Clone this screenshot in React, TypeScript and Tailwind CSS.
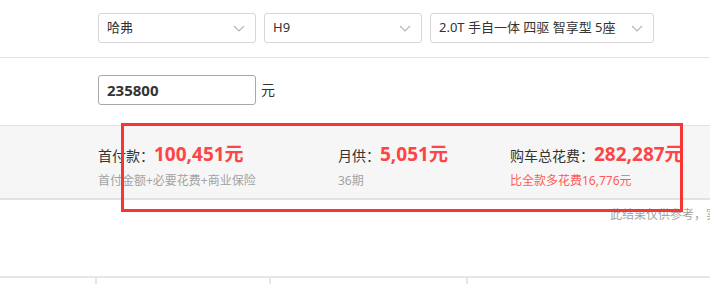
import { ReactNode } from "react"

const font = { fontFamily: '"Noto Sans", "Noto Sans CJK SC", sans-serif' }

function Chevron() {
  return (
    <svg width="12" height="7" viewBox="0 0 12 7" fill="none">
      <path d="M1 1l5 5 5-5" stroke="#b5b5b5" strokeWidth="1.2" />
    </svg>
  )
}

function Select({ value, width }: { value: string; width: string }) {
  return (
    <div
      className={`flex h-[30px] items-center justify-between rounded-[3px] border border-[#d6d6d6] bg-white pl-[8px] pr-[10px] text-[13px] text-[#333] ${width}`}
    >
      <span>{value}</span>
      <Chevron />
    </div>
  )
}

function Result({
  label,
  amount,
  note,
  noteClass,
  width,
}: {
  label: string
  amount: string
  note: ReactNode
  noteClass: string
  width: string
}) {
  return (
    <div className={`flex flex-col ${width}`}>
      <div className="flex items-baseline">
        <span className="text-[14px] text-[#333]">{label}：</span>
        <span className="text-[19px] font-bold text-[#fd4545]">{amount}</span>
      </div>
      <p className={`mt-[3px] text-[12px] ${noteClass}`}>{note}</p>
    </div>
  )
}

export default function App() {
  return (
    <div className="relative h-[284px] w-[710px] overflow-hidden bg-white" style={font}>
      {/* выбор модели */}
      <div className="flex h-[58px] gap-[8px] border-b border-[#e3e3e3] pl-[98px] pt-[13px]">
        <Select value="哈弗" width="w-[158px]" />
        <Select value="H9" width="w-[158px]" />
        <Select value="2.0T 手自一体 四驱 智享型 5座" width="w-[224px]" />
      </div>

      {/* цена */}
      <div className="flex h-[67px] items-start pl-[98px] pt-[17px]">
        <div className="flex h-[30px] w-[158px] items-center rounded-[3px] border border-[#a9a9a9] pl-[8px] text-[15px] font-bold text-[#333]">
          235800
        </div>
        <span className="ml-[5px] mt-[4px] text-[14px] text-[#333]">元</span>
      </div>

      {/* итог */}
      <div className="flex h-[75px] border-b-2 border-t border-[#e2e2e2] bg-[#f6f6f6] pl-[98px] pt-[14px]">
        <Result
          label="首付款"
          amount="100,451元"
          note="首付金额+必要花费+商业保险"
          noteClass="text-[#a3a3a3]"
          width="w-[240px]"
        />
        <Result label="月供" amount="5,051元" note="36期" noteClass="text-[#a3a3a3]" width="w-[172px]" />
        <Result
          label="购车总花费"
          amount="282,287元"
          note="比全款多花费16,776元"
          noteClass="text-[#ff5a5a]"
          width="w-[200px]"
        />
      </div>

      <p className="mt-[6px] whitespace-nowrap pl-[610px] text-[12px] text-[#a3a3a3]">
        此结果仅供参考，实际以4S店报价为准
      </p>

      {/* таблица */}
      <div className="absolute left-0 top-[276px] flex h-[8px] w-full border-t-2 border-[#e6e6e6]">
        <div className="w-[97px] border-r-2 border-[#e6e6e6]" />
        <div className="w-[174px] border-r-2 border-[#e6e6e6]" />
        <div className="w-[197px] border-r-2 border-[#e6e6e6]" />
        <div className="flex-1" />
      </div>

      {/* выделение */}
      <div className="pointer-events-none absolute left-[121px] top-[123px] h-[89px] w-[562px] border-[3px] border-[#f73535]" />
    </div>
  )
}
